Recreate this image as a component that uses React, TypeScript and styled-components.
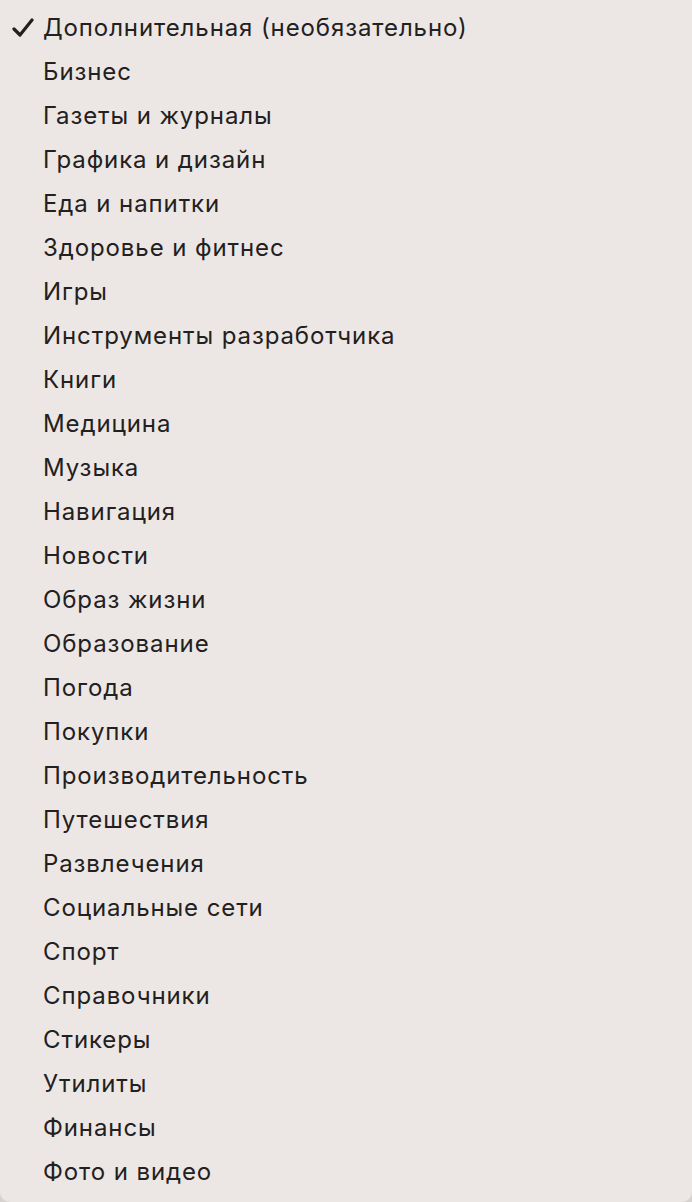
import { createGlobalStyle, styled } from 'styled-components'

const GlobalStyle = createGlobalStyle`
    html, body {
        margin: 0;
        padding: 0;
        background: #d6d2d0;
    }
`;

const Menu = styled.ul`
    list-style: none;
    margin: 0;
    padding: 5px 0 0 0;
    width: 692px;
    height: 1202px;
    box-sizing: border-box;
    background: #ece7e4;
    font-family: Inter, "Noto Sans", sans-serif;
    font-size: 24px;
    letter-spacing: 0.9px;
    color: #222020;
    border-bottom-left-radius: 10px;
    border-bottom-right-radius: 10px;
`;

const Item = styled.li`
    display: flex;
    align-items: center;
    height: 44px;
    padding-left: 43px;
    position: relative;
    white-space: nowrap;
`;

const Check = styled.svg`
    position: absolute;
    left: 12px;
    top: 13px;
    width: 22px;
    height: 20px;
`;

const items = [
    'Дополнительная (необязательно)',
    'Бизнес',
    'Газеты и журналы',
    'Графика и дизайн',
    'Еда и напитки',
    'Здоровье и фитнес',
    'Игры',
    'Инструменты разработчика',
    'Книги',
    'Медицина',
    'Музыка',
    'Навигация',
    'Новости',
    'Образ жизни',
    'Образование',
    'Погода',
    'Покупки',
    'Производительность',
    'Путешествия',
    'Развлечения',
    'Социальные сети',
    'Спорт',
    'Справочники',
    'Стикеры',
    'Утилиты',
    'Финансы',
    'Фото и видео',
];

export default function App(){
    return(
        <>
            <GlobalStyle />
            <Menu>
                {items.map((label, i) => (
                    <Item key={label}>
                        {i === 0 && (
                            <Check viewBox="0 0 22 20">
                                <path d="M2 11 L8 17 L20 2" fill="none" stroke="#222020" strokeWidth="3.2" strokeLinecap="round" strokeLinejoin="round" />
                            </Check>
                        )}
                        {label}
                    </Item>
                ))}
            </Menu>
        </>
    )
}
